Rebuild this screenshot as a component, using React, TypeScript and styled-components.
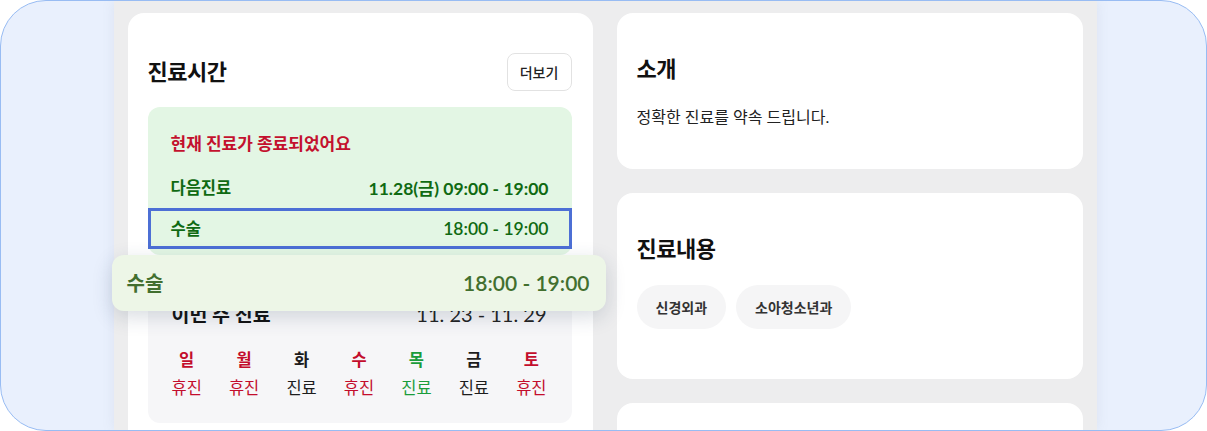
import React from "react";
import styled, { createGlobalStyle } from "styled-components";

const GlobalStyle = createGlobalStyle`
  * {
    box-sizing: border-box;
  }
  body {
    margin: 0;
    background: #ffffff;
    font-family: Lato, "Noto Sans CJK KR", sans-serif;
    color: #222;
  }
`;

const Frame = styled.div`
  position: relative;
  width: 1207px;
  height: 431px;
  border: 1.5px solid #98bcf3;
  border-radius: 46px;
  background: #e9f0fd;
  overflow: hidden;
  padding-left: 112.5px;
`;

const Board = styled.main`
  width: 983px;
  height: 100%;
  background: #ededee;
  padding: 11.5px 14px 0;
  display: grid;
  grid-template-columns: 465px 466px;
  column-gap: 24px;
  align-items: start;
  box-shadow: 0 0 12px rgba(120, 130, 150, 0.12);
`;

const ScheduleCard = styled.section`
  background: #fff;
  border-radius: 16px;
  padding: 40px 21px 0 20px;
  min-height: 440px;
`;

const Header = styled.div`
  display: flex;
  justify-content: space-between;
  align-items: center;
  height: 38px;
`;

const Title = styled.h2`
  margin: 0;
  font-size: 22px;
  line-height: 26px;
  font-weight: 700;
  letter-spacing: -0.5px;
  color: #111;
`;

const MoreButton = styled.button`
  width: 65px;
  height: 38px;
  border: 1px solid #e2e2e2;
  border-radius: 8px;
  background: #fff;
  font-family: inherit;
  font-size: 14px;
  font-weight: 500;
  color: #222;
  padding: 0;
`;

const StatusBox = styled.div`
  margin-top: 16px;
  background: #e3f6e4;
  border-radius: 12px;
  padding: 26px 0 6px;
`;

const Notice = styled.p`
  margin: 0 0 12px;
  padding: 0 23px;
  font-size: 17px;
  line-height: 22px;
  font-weight: 700;
  color: #c3112e;
`;

const HourRow = styled.div<{ $active?: boolean }>`
  display: flex;
  justify-content: space-between;
  align-items: center;
  height: 41px;
  padding: 0 23px;
  font-size: 16.5px;
  font-weight: 700;
  color: #0f6a12;
  box-shadow: ${(p) => (p.$active ? "inset 0 0 0 3px #4c6fd5" : "none")};
`;

const Times = styled.span<{ $light?: boolean }>`
  font-size: 17.5px;
  font-weight: ${(p) => (p.$light ? 600 : 700)};
`;

const WeekBox = styled.div`
  margin-top: 12px;
  background: #f6f6f8;
  border-radius: 12px;
  padding: 33px 25px 24px 24px;
`;

const WeekHead = styled.div`
  display: flex;
  justify-content: space-between;
  align-items: center;
  height: 28px;
`;

const WeekTitle = styled.span`
  font-size: 19.5px;
  font-weight: 700;
  color: #111;
`;

const WeekRange = styled.span`
  font-size: 20px;
  font-weight: 400;
  color: #222;
`;

const Days = styled.div`
  display: flex;
  justify-content: space-between;
  margin-top: 21px;
`;

const tones = {
  off: "#c30d2c",
  open: "#1d1d1d",
  today: "#1a9c3b",
};

const Day = styled.div<{ $tone: keyof typeof tones }>`
  display: flex;
  flex-direction: column;
  align-items: center;
  gap: 6px;
  color: ${(p) => tones[p.$tone]};
  font-size: 16.5px;
  line-height: 22px;
`;

const DayName = styled.span`
  font-weight: 700;
`;

const DragGhost = styled.div`
  position: absolute;
  left: 110.5px;
  top: 253.5px;
  width: 494px;
  height: 56px;
  border-radius: 12px;
  background: #edf6e7;
  box-shadow: 0 6px 20px rgba(40, 60, 90, 0.18);
  display: flex;
  justify-content: space-between;
  align-items: center;
  padding: 0 16px 0 15px;
  font-size: 20px;
  font-weight: 700;
  color: #426f2f;
`;

const GhostTimes = styled.span`
  font-size: 21px;
  font-weight: 600;
`;

const Column = styled.div`
  display: flex;
  flex-direction: column;
  gap: 24px;
`;

const InfoCard = styled.section<{ $height: number }>`
  background: #fff;
  border-radius: 16px;
  padding: 43px 20px 0;
  height: ${(p) => p.$height}px;
`;

const Intro = styled.p`
  margin: 24px 0 0;
  font-size: 16px;
  line-height: 22px;
  color: #222;
`;

const Tags = styled.div`
  display: flex;
  gap: 10px;
  margin-top: 23px;
`;

const Tag = styled.span`
  display: inline-flex;
  align-items: center;
  height: 44px;
  padding: 0 19px;
  border-radius: 22px;
  background: #f5f5f6;
  font-size: 14px;
  font-weight: 600;
  color: #333;
`;

const week: { name: string; status: string; tone: keyof typeof tones }[] = [
  { name: "일", status: "휴진", tone: "off" },
  { name: "월", status: "휴진", tone: "off" },
  { name: "화", status: "진료", tone: "open" },
  { name: "수", status: "휴진", tone: "off" },
  { name: "목", status: "진료", tone: "today" },
  { name: "금", status: "진료", tone: "open" },
  { name: "토", status: "휴진", tone: "off" },
];

export default function App() {
  return (
    <>
      <GlobalStyle />
      <Frame>
        <Board>
          <ScheduleCard>
            <Header>
              <Title>진료시간</Title>
              <MoreButton>더보기</MoreButton>
            </Header>
            <StatusBox>
              <Notice>현재 진료가 종료되었어요</Notice>
              <HourRow>
                <span>다음진료</span>
                <Times>11.28(금) 09:00 - 19:00</Times>
              </HourRow>
              <HourRow $active>
                <span>수술</span>
                <Times $light>18:00 - 19:00</Times>
              </HourRow>
            </StatusBox>
            <WeekBox>
              <WeekHead>
                <WeekTitle>이번 주 진료</WeekTitle>
                <WeekRange>11. 23 - 11. 29</WeekRange>
              </WeekHead>
              <Days>
                {week.map((d) => (
                  <Day key={d.name} $tone={d.tone}>
                    <DayName>{d.name}</DayName>
                    <span>{d.status}</span>
                  </Day>
                ))}
              </Days>
            </WeekBox>
          </ScheduleCard>
          <Column>
            <InfoCard $height={156}>
              <Title>소개</Title>
              <Intro>정확한 진료를 약속 드립니다.</Intro>
            </InfoCard>
            <InfoCard $height={186}>
              <Title>진료내용</Title>
              <Tags>
                <Tag>신경외과</Tag>
                <Tag>소아청소년과</Tag>
              </Tags>
            </InfoCard>
            <InfoCard $height={120} />
          </Column>
        </Board>
        <DragGhost>
          <span>수술</span>
          <GhostTimes>18:00 - 19:00</GhostTimes>
        </DragGhost>
      </Frame>
    </>
  );
}
